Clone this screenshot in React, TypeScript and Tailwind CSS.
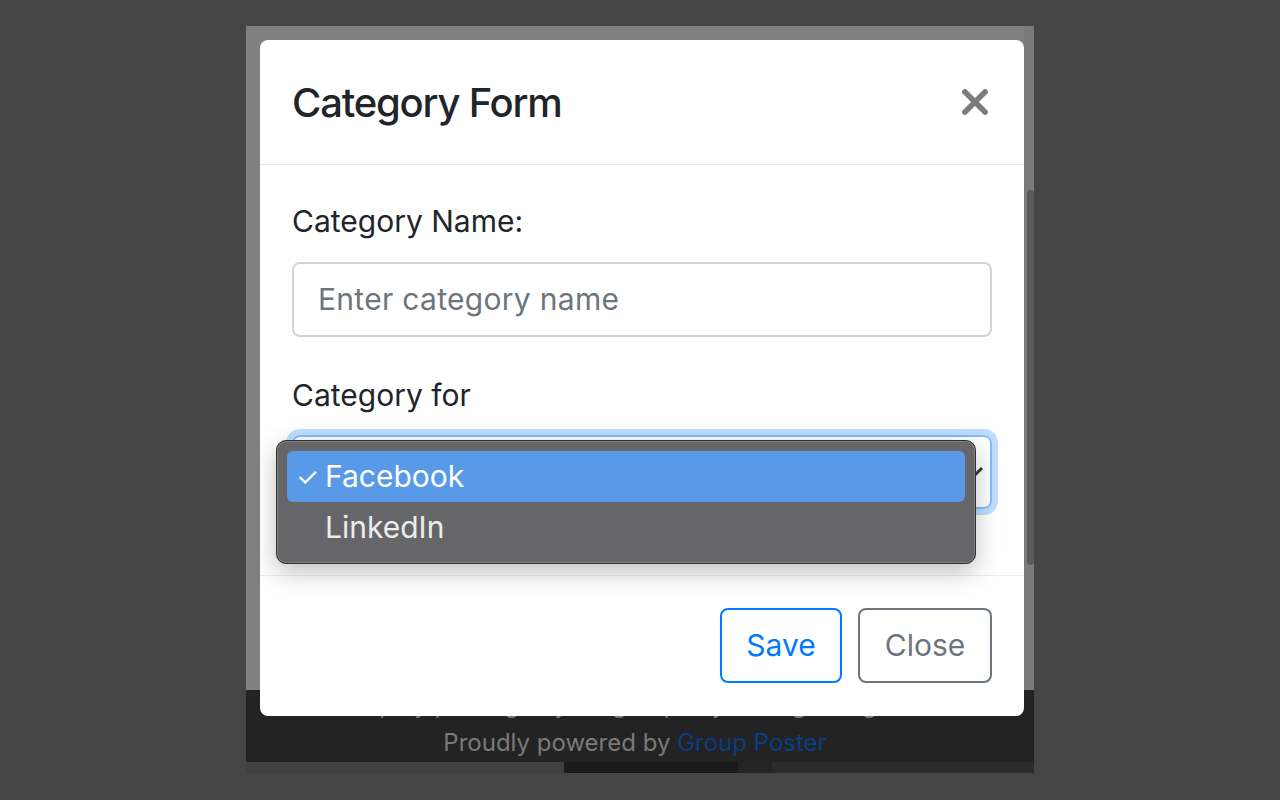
import React from "react";

const font = { fontFamily: "Inter, 'Noto Sans', sans-serif" };

function CloseIcon() {
  return (
    <svg width="26" height="26" viewBox="0 0 26 26" className="shrink-0">
      <path d="M3 3 L23 23 M23 3 L3 23" stroke="#7c7c7c" strokeWidth="5.5" strokeLinecap="square" />
    </svg>
  );
}

function CategoryModal() {
  return (
    <div className="absolute left-[14px] top-[14px] w-[764px] h-[676px] bg-white rounded-[8px] flex flex-col">
      {/* header */}
      <div className="h-[125px] shrink-0 pl-[32px] pr-[36px] flex items-center justify-between border-b border-[#e9e9ef]">
        <h5 className="text-[40px] font-medium tracking-[-1.2px] text-[#212529] leading-none pt-[2px]">Category Form</h5>
        <CloseIcon />
      </div>

      {/* body */}
      <div className="flex-1 px-[32px] pt-[34px] flex flex-col">
        <label className="text-[30px] leading-[1.5] text-[#212529]">Category Name:</label>
        <div className="mt-[18px] h-[75px] border-2 border-[#ced4da] rounded-[8px] flex items-center pl-[24px] text-[30px] tracking-[0.3px] text-[#6c757d]">
          Enter category name
        </div>
        <label className="mt-[36px] text-[30px] leading-[1.5] text-[#212529]">Category for</label>
        <div className="relative mt-[17px] h-[74px] border-2 border-[#80bdff] rounded-[8px] shadow-[0_0_0_6px_rgba(0,123,255,0.25)] flex items-center justify-end pr-[6px]">
          <svg width="18" height="12" viewBox="0 0 18 12">
            <path d="M2 2 L9 9 L16 2" stroke="#3a3a3a" strokeWidth="3" fill="none" />
          </svg>

          {/* native dropdown menu open over the select */}
          <div className="absolute left-[-18px] top-[3px] w-[700px] h-[124px] rounded-[10px] bg-[#666668] border border-[#2e2e2e] shadow-[inset_0_0_0_1px_rgba(255,255,255,0.18),0_8px_24px_rgba(0,0,0,0.25)] p-[10px] flex flex-col">
            <div className="h-[52px] rounded-[6px] bg-[#5899e8] flex items-center text-white text-[30px]">
              <span className="w-[38px] pl-[9px] text-[26px] leading-none">✓</span>
              <span>Facebook</span>
            </div>
            <div className="h-[52px] flex items-center text-[#ededed] text-[30px] pl-[38px]">LinkedIn</div>
          </div>
        </div>
      </div>

      {/* footer */}
      <div className="h-[141px] shrink-0 border-t border-[#e9e9ef] px-[32px] pt-[32px] flex justify-end gap-[16px]">
        <button className="h-[75px] w-[122px] rounded-[8px] border-2 border-[#007bff] text-[#007bff] text-[30px]">Save</button>
        <button className="h-[75px] w-[134px] rounded-[8px] border-2 border-[#6c757d] text-[#6c757d] text-[30px]">Close</button>
      </div>
    </div>
  );
}

export default function App() {
  return (
    <div className="min-h-screen bg-[#454545] pt-[26px] pl-[246px]" style={font}>
      <div className="relative w-[788px] h-[747px] bg-[#808080] flex flex-col">
        <div className="flex-1 flex">
          <div className="flex-1" />
          {/* scrollbar */}
          <div className="w-[10px] bg-[#7a7a7a] flex flex-col">
            <div className="mt-[164px] ml-auto w-[7px] h-[375px] rounded-full bg-[#5a5a5a]" />
          </div>
        </div>

        <footer className="h-[72px] shrink-0 bg-[#232323] pr-[10px] flex flex-col items-center text-[24px] text-[#7a7a7a]">
          <p className="leading-[30px]">Simplify posting to your groups by saving categories</p>
          <p className="leading-[34px] mt-[6px]">
            Proudly powered by <span className="text-[#0a3e80]">Group Poster</span>
          </p>
        </footer>

        <div className="h-[11px] shrink-0 flex">
          <div className="w-[318px] bg-[#404040]" />
          <div className="w-[174px] bg-[#1b1b1c]" />
          <div className="w-[34px] bg-[#232427]" />
          <div className="flex-1 bg-[#2a2b2f]" />
        </div>

        <CategoryModal />
      </div>
    </div>
  );
}
